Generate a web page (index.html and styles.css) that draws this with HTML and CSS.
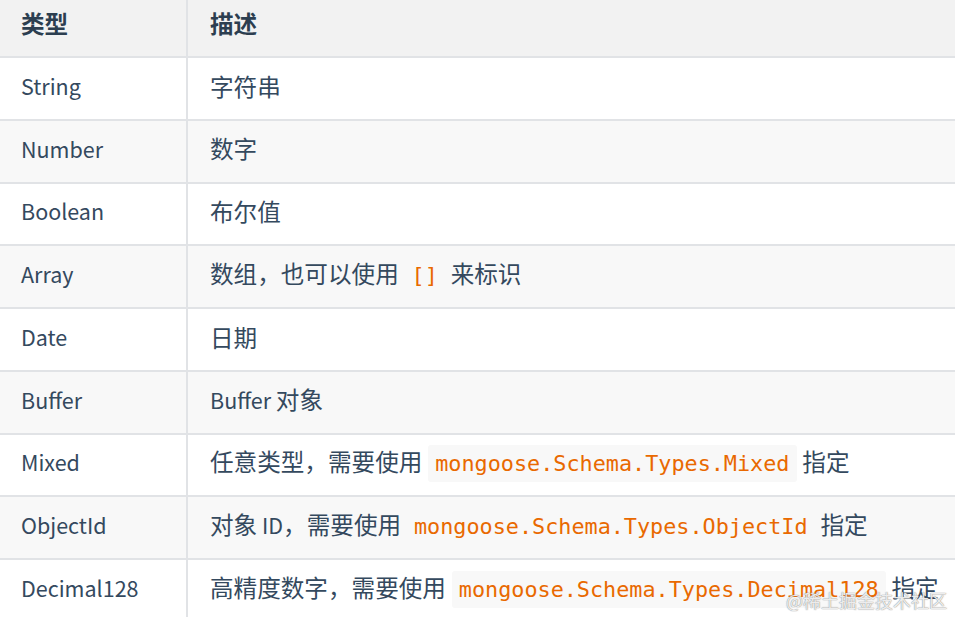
FILE: index.html
```html
<!DOCTYPE html>
<html lang="zh-CN">
<head>
<meta charset="utf-8">
<title>Mongoose Schema Types</title>
<link rel="stylesheet" href="styles.css">
</head>
<body>
<div class="wrap">
<table class="types">
  <thead>
    <tr><th class="c1"><span class="zh">类型</span></th><th class="c2"><span class="zh">描述</span></th></tr>
  </thead>
  <tbody>
    <tr><td class="c1">String</td><td class="c2"><span class="zh">字符串</span></td></tr>
    <tr><td class="c1">Number</td><td class="c2"><span class="zh">数字</span></td></tr>
    <tr><td class="c1">Boolean</td><td class="c2"><span class="zh">布尔值</span></td></tr>
    <tr><td class="c1">Array</td><td class="c2"><span class="zh">数组，也可以使用</span> <code>[]</code> <span class="zh">来标识</span></td></tr>
    <tr><td class="c1">Date</td><td class="c2"><span class="zh">日期</span></td></tr>
    <tr><td class="c1">Buffer</td><td class="c2">Buffer <span class="zh">对象</span></td></tr>
    <tr><td class="c1">Mixed</td><td class="c2"><span class="zh">任意类型，需要使用</span> <code>mongoose.Schema.Types.Mixed</code> <span class="zh">指定</span></td></tr>
    <tr><td class="c1">ObjectId</td><td class="c2"><span class="zh">对象</span> ID<span class="zh">，需要使用</span> <code>mongoose.Schema.Types.ObjectId</code> <span class="zh">指定</span></td></tr>
    <tr><td class="c1">Decimal128</td><td class="c2"><span class="zh">高精度数字，需要使用</span> <code>mongoose.Schema.Types.Decimal128</code> <span class="zh">指定</span></td></tr>
  </tbody>
</table>
<div class="watermark">@稀土掘金技术社区</div>
</div>
</body>
</html>
```

FILE: styles.css
```css
html, body {
  margin: 0;
  padding: 0;
  background: #ffffff;
}
body {
  width: 955px;
  height: 617px;
  overflow: hidden;
  font-family: "Noto Sans CJK SC", "Noto Sans", sans-serif;
  color: #34495e;
}
.wrap {
  position: relative;
  width: 955px;
  height: 617px;
  overflow: hidden;
}
.types {
  border-collapse: collapse;
  width: 1000px;
  table-layout: fixed;
  font-size: 21.5px;
  line-height: 1.3;
}
.types th, .types td {
  border: 2px solid #e1e3e6;
  text-align: left;
  vertical-align: middle;
  white-space: nowrap;
  padding: 0 0 5px 22px;
}
.types th:first-child, .types td:first-child {
  border-left: none;
  padding-left: 21px;
}
.types th:last-child, .types td:last-child {
  border-right: none;
}
.types th.c1, .types td.c1 {
  width: 187px;
  box-sizing: border-box;
}
.zh {
  font-size: 23.6px;
}
.types thead th {
  border-top: none;
  background: #f2f2f2;
  font-weight: 700;
  color: #2c3e50;
  height: 57px;
  box-sizing: border-box;
  padding-bottom: 10px;
}
.types tbody tr {
  height: 62.75px;
}
.types tbody tr:nth-child(even) td {
  background: #f8f8f8;
}
.types code {
  font-family: "DejaVu Sans Mono", "Liberation Mono", monospace;
  font-size: 21.8px;
  color: #e96900;
  background: #f8f8f8;
  padding: 6px 7px;
  border-radius: 3px;
  margin: 0 1px;
}
.watermark {
  position: absolute;
  right: 8px;
  bottom: 4px;
  font-family: "Noto Sans CJK SC", sans-serif;
  font-size: 18px;
  color: rgba(255, 255, 255, 0.85);
  text-shadow: 0 0 1px rgba(120, 120, 120, 0.7), 0 0 1px rgba(120, 120, 120, 0.7);
}
```
